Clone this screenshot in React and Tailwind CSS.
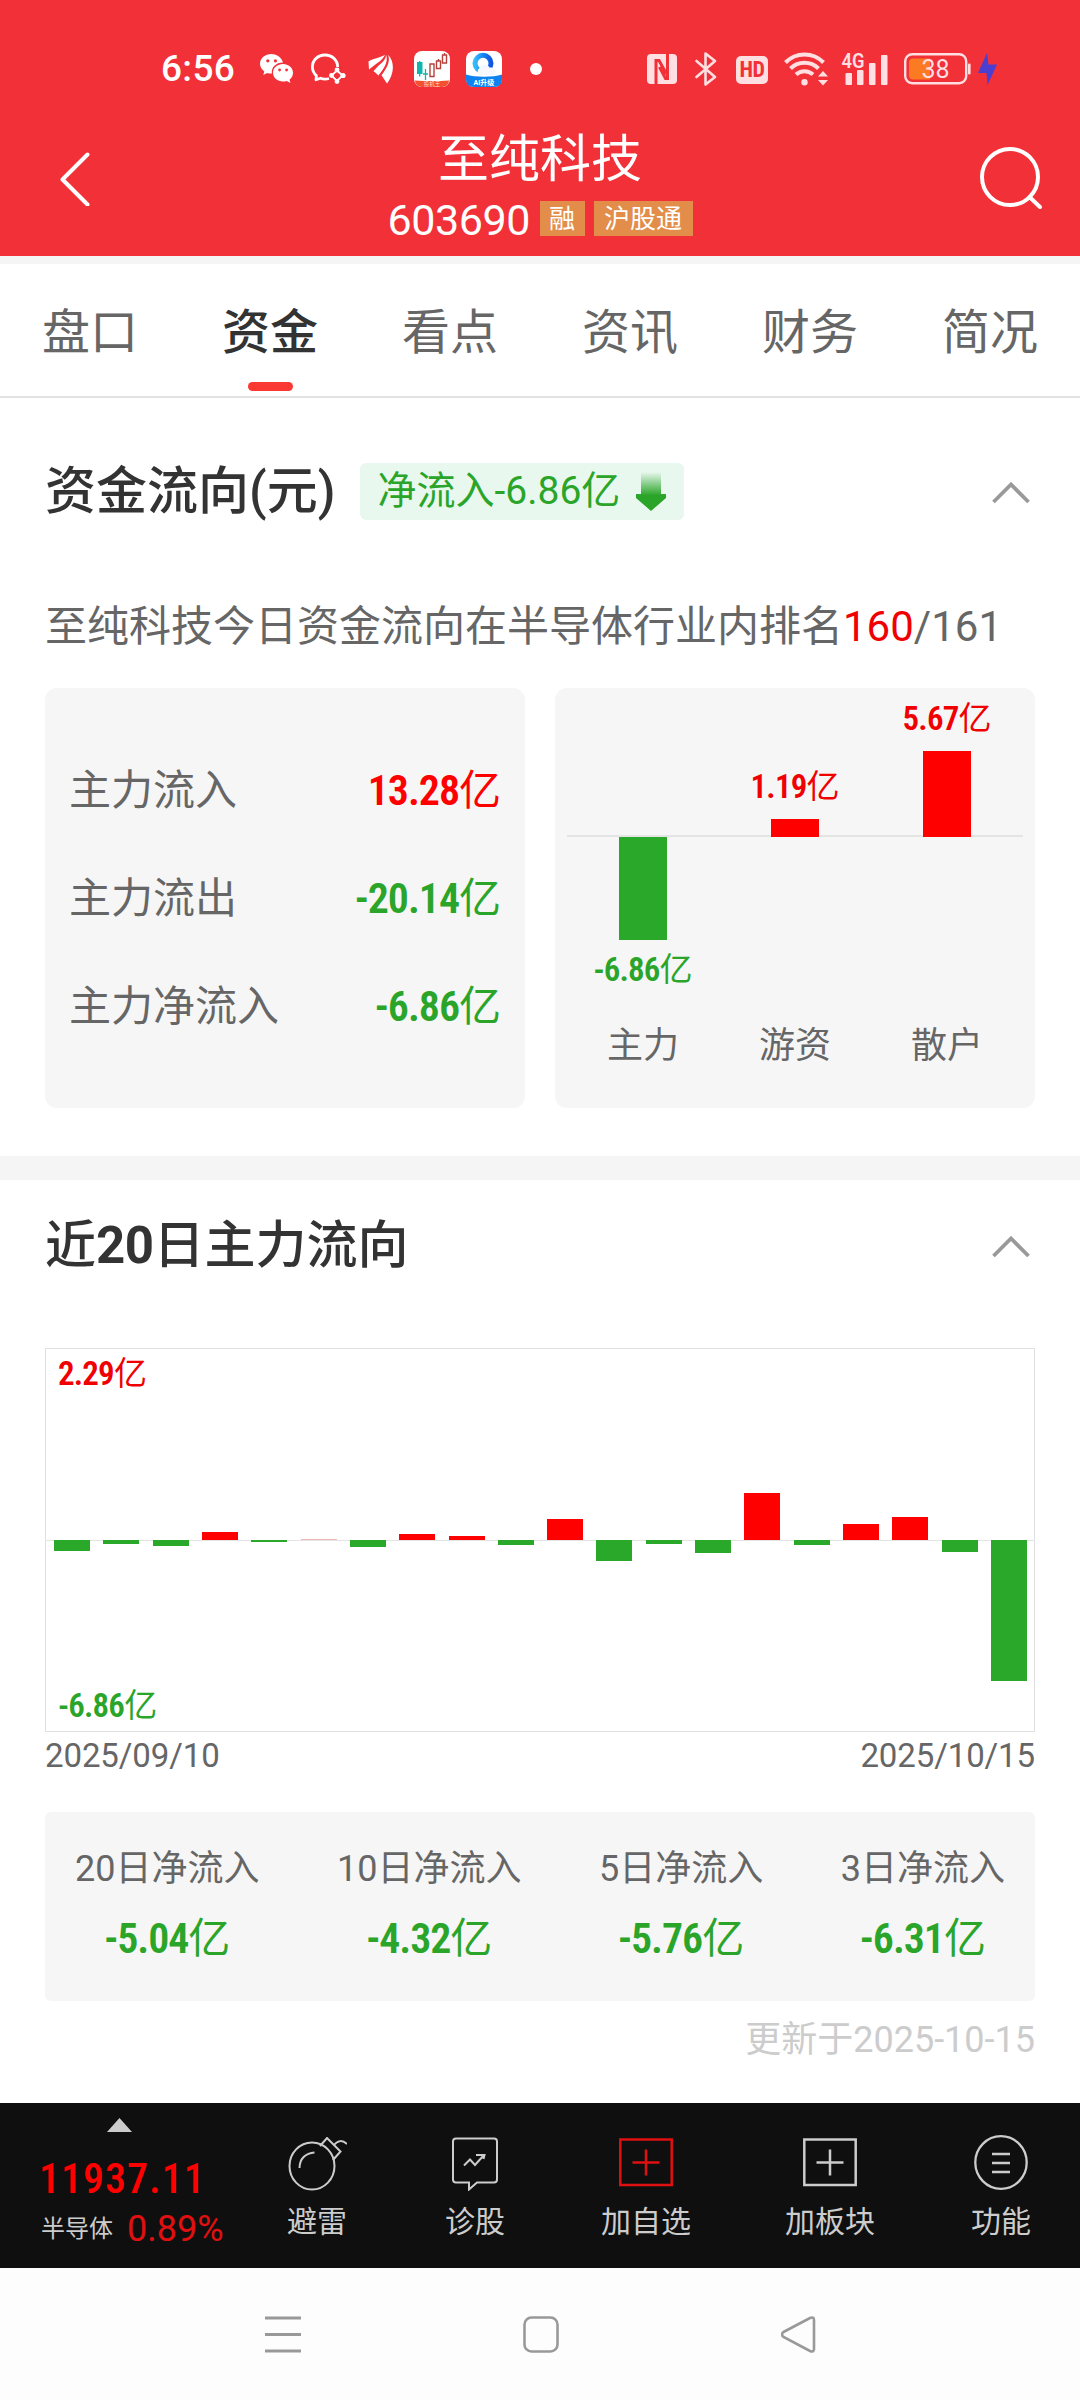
const tabs = ["盘口", "资金", "看点", "资讯", "财务", "简况"];

const flows = [
  { label: "主力流入", value: "13.28", color: "text-[#ff0000]" },
  { label: "主力流出", value: "-20.14", color: "text-[#2aa52a]" },
  { label: "主力净流入", value: "-6.86", color: "text-[#2aa52a]" },
];

const holders = [
  { name: "主力", value: "-6.86", up: 0, down: 103 },
  { name: "游资", value: "1.19", up: 18, down: 0 },
  { name: "散户", value: "5.67", up: 86, down: 0 },
];

// bar heights in px, negative = outflow
const days = [-11, -4, -5.5, 8, -1.6, 0.4, -6.5, 6, 4.5, -4.5, 21, -21, -4, -13, 47.5, -4.5, 16, 23.5, -12, -141];

const sums = [
  { label: "20日净流入", value: "-5.04" },
  { label: "10日净流入", value: "-4.32" },
  { label: "5日净流入", value: "-5.76" },
  { label: "3日净流入", value: "-6.31" },
];

// narrow bold figures followed by the unit
function Amount({ value, unit = "亿" }) {
  return (
    <span className="inline-flex whitespace-nowrap">
      <span className="font-semibold font-stretch-condensed tracking-[-0.025em]">{value}</span>
      <span>{unit}</span>
    </span>
  );
}

function StatusBar() {
  return (
    <div className="flex h-[137px] items-center pl-[161px] text-white">
      <span className="mt-px w-[73px] text-[37px] font-medium leading-[40px] tracking-[0.3px]">6:56</span>

      {/* WeChat */}
      <svg className="ml-[26px]" width="34" height="29" viewBox="0 0 34 29">
        <path fill="#fff" d="M11.5 0C5 0 0 4.300 0 9.800c0 3.200 1.700 5.800 4.300 7.600L3.200 21l4-2.100c1.600.5 3 .7 4.700.6C11 13.600 16 8.600 23 8.600 21.800 3.600 17 0 11.500 0z" />
        <path fill="#fff" d="M33 18.800c0-4.900-4.600-8.800-10-8.800s-10 3.900-10 8.800 4.600 8.800 10 8.800c1.400 0 2.600-.2 3.800-.6l3.700 2-1-3.200c2.200-1.700 3.500-4.200 3.500-7z" />
        <g fill="#f23038">
          <circle cx="7.800" cy="6.800" r="1.600" /><circle cx="15.400" cy="6.800" r="1.600" />
          <circle cx="19.600" cy="16" r="1.400" /><circle cx="26.600" cy="16" r="1.400" />
        </g>
      </svg>

      {/* chat bubble */}
      <svg className="ml-[17px]" width="35" height="31" viewBox="0 0 35 31" fill="none" stroke="#fff" strokeWidth="2.800">
        <path d="M18 25.500c-3 .8-6 .7-8.500-.3L5 26.800l.4-4.200C2.500 20 1.400 17 1.400 14 1.400 7 7 2 14 2s12.500 5 12.700 12" strokeLinejoin="round" />
        <path d="M26 17.500l5.500 5-5.500 5.500-5.500-5.500z" strokeWidth="1.800" />
        <g fill="#fff" stroke="none"><circle cx="26" cy="17" r="2.400" /><circle cx="32" cy="22.500" r="2.600" /><circle cx="26" cy="28.500" r="2.400" /><circle cx="20.500" cy="22.500" r="2.400" /></g>
      </svg>

      {/* feather */}
      <svg className="ml-[22px]" width="26" height="30" viewBox="0 0 26 30" fill="#fff">
        <path d="M.5 7.500C6 4 11 4.500 17 .8 14 7 9 9 1 15.500z" />
        <path d="M18 .5c.5 6-6 9-12.500 16.500l5 4.500C14.500 15.500 21 9 18 .5z" />
        <path d="M20 .8c3 7-2 14-6.500 20.500L19 29.500C25 22 28 9 20 .8z" />
      </svg>

      {/* trading app */}
      <svg className="ml-5" width="36" height="36" viewBox="0 0 36 36">
        <rect width="36" height="36" rx="8" fill="#fff" />
        <path d="M1 29.500q17 1 34 0C35 33 32 36 28 36H8c-4 0-7-3-7-6.500z" fill="#f4502f" />
        <rect x="3" y="11" width="5.500" height="12" fill="#13b5aa" />
        <path d="M5.700 10v15.500M11.500 18v11M9 23h5" stroke="#13b5aa" strokeWidth="1.300" />
        <g fill="none" stroke="#b8403a" strokeWidth="1.400"><path d="M16 13h4v12.500h-4zM22.500 10h4v7.500h-4zM28.500 4h4v8h-4zM24.500 8v2M30.500 2v2" /></g>
        <text x="18" y="34.600" textAnchor="middle" fontSize="5.500" fill="#ffd9cf">投机王</text>
      </svg>

      {/* AI browser app */}
      <svg className="ml-4" width="36" height="36" viewBox="0 0 36 36">
        <defs><linearGradient id="ring"><stop offset="0" stopColor="#35bdfa" /><stop offset=".5" stopColor="#1a84f5" /><stop offset="1" stopColor="#1256e0" /></linearGradient></defs>
        <rect width="36" height="36" rx="8" fill="#fff" />
        <path d="M0 23.500c9 3 27 3 36 0V28c0 5-3 8-8 8H8c-5 0-8-3-8-8z" fill="#0e83f0" />
        <circle cx="17" cy="12.300" r="8" fill="none" stroke="url(#ring)" strokeWidth="5" />
        <path d="M14 24a4 4 0 0 1-.5-7 5.500 5.500 0 0 1 10-.5c4-.5 7 2 6 7.500z" fill="#f5f9ff" />
        <text x="18" y="34" textAnchor="middle" fontSize="7" fontWeight="700" fill="#fff">AI升级</text>
      </svg>

      <span className="ml-7 size-3 rounded-full bg-white" />

      {/* NFC */}
      <svg className="ml-[105px]" width="30" height="30" viewBox="0 0 30 30">
        <rect width="30" height="30" rx="4" fill="#ffdfe1" />
        <path d="M9 30V6.500h3L19.500 20M20.500 0v24.500h-2L12.500 13" fill="none" stroke="#f23038" strokeWidth="3" />
      </svg>
      {/* bluetooth */}
      <svg className="ml-[18px]" width="22" height="34" viewBox="0 0 22 34" fill="none" stroke="#ffdfe1" strokeWidth="2.600" strokeLinejoin="round" strokeLinecap="round">
        <path d="M1.500 9l18.500 16-9.500 7.500V1.500L20 9 1.500 25" />
      </svg>
      <span className="ml-[19px] mt-[3px] flex h-7 w-8 items-center justify-center rounded-[5px] bg-[#ffdfe1] text-[22px] font-bold leading-none text-[#f23038]">
        <span className="tracking-[-0.5px] font-stretch-condensed">HD</span>
      </span>
      {/* wifi */}
      <svg className="ml-4" width="44" height="35" viewBox="0 0 44 35" fill="none" stroke="#ffdfe1" strokeWidth="4">
        <path d="M1.500 11.500a26.500 26.500 0 0 1 38 0M6.500 17.500a20 20 0 0 1 28 0M12 23.500a12.500 12.500 0 0 1 17 0" />
        <circle cx="20.500" cy="31.300" r="3.200" fill="#ffdfe1" stroke="none" />
        <path d="M34 25.500l5-5.500 5 5.500zM34 29h10l-5 5.500z" fill="#ffdfe1" stroke="none" />
      </svg>
      {/* signal */}
      <svg className="ml-3.5 overflow-visible" width="46" height="34" viewBox="0 0 46 34" fill="#ffdfe1">
        <text x="-.5" y="15.500" fontSize="20" fontWeight="600" textLength="23" lengthAdjust="spacingAndGlyphs">4G</text>
        <rect x="3.500" y="21" width="6.500" height="12" rx="1" /><rect x="15" y="18" width="6.500" height="15" rx="1" />
        <rect x="27" y="11" width="6.500" height="22" rx="1" /><rect x="39" y="3" width="6.500" height="30" rx="1" />
      </svg>
      {/* battery */}
      <svg className="ml-4" width="67" height="32" viewBox="0 0 67 32">
        <rect x="1.200" y="1.200" width="61" height="29" rx="7" fill="none" stroke="#ffdfe1" strokeWidth="2.400" />
        <path d="M9 5.500h17v21H9c-2.500 0-4-1.500-4-4v-13c0-2.500 1.500-4 4-4z" fill="#fc7a21" />
        <rect x="64" y="10.500" width="2.600" height="11" rx="1.300" fill="#ffdfe1" />
        <text x="31.500" y="25" textAnchor="middle" fontSize="25" fill="#ffdfe1">38</text>
      </svg>
      <svg className="ml-1.5" width="22" height="32" viewBox="0 0 22 32">
        <path d="M10 0L1 20h8.500l1 12L20 11.500h-8.500z" fill="#4a3fd0" />
      </svg>
    </div>
  );
}

function Chevron() {
  return (
    <svg className="mt-0.5" width="38" height="22" viewBox="0 0 38 22" fill="none" stroke="#999" strokeWidth="3.800">
      <path d="M1.500 20L19 2.500 36.500 20" />
    </svg>
  );
}

function Tool({ label, width, children }) {
  return (
    <div className={`flex flex-col items-center ${width}`}>
      <div className="flex h-[88px] items-end justify-center">{children}</div>
      <span className="mt-[11px] text-[30px] leading-10 text-[#ccc]">{label}</span>
    </div>
  );
}

export default function App() {
  return (
    <div className="flex h-[2400px] w-[1080px] flex-col overflow-hidden bg-white font-[Roboto,'Noto_Sans_CJK_SC',sans-serif] text-[#666]">
      {/* Header */}
      <header className="h-64 shrink-0 bg-[#f23038] text-white">
        <StatusBar />
        <div className="flex h-[119px] items-start justify-between pl-[59px] pr-9">
          <svg className="mt-[15px]" width="32" height="54" viewBox="0 0 32 54" fill="none" stroke="#fff" strokeWidth="4" strokeLinecap="round" strokeLinejoin="round">
            <path d="M28.500 2.500L3.500 27.500l25 25" />
          </svg>
          <div className="ml-[9px] flex flex-col items-center">
            <h1 className="-mt-[7px] text-[51px] leading-[60px]">至纯科技</h1>
            <div className="mt-2.5 flex h-[36px] items-center">
              <span className="mt-[3px] w-[142px] text-[43px] leading-10 tracking-[-0.4px]">603690</span>
              <span className="ml-2.5 h-[35px] w-[45px] bg-[#e38d4b] text-center text-[26px] leading-[37px]">融</span>
              <span className="ml-[9px] h-[35px] w-[99px] bg-[#e38d4b] text-center text-[26px] leading-[37px]">沪股通</span>
            </div>
          </div>
          <svg className="mt-[9px]" width="64" height="64" viewBox="0 0 64 64" fill="none" stroke="#fff" strokeWidth="4">
            <circle cx="30" cy="31" r="28" /><path d="M49.500 51L60 61" strokeLinecap="round" />
          </svg>
        </div>
      </header>
      <div className="h-2 shrink-0 bg-[#f5f5f5]" />

      {/* Tabs */}
      <nav className="flex h-[134px] shrink-0 border-b-2 border-[#e2e2e2]">
        {tabs.map((t) => (
          <div key={t} className="flex w-[180px] flex-col items-center pt-[39px]">
            <span className={t === "资金" ? "text-[48px] font-medium leading-[60px] text-[#333]" : "text-[48px] leading-[60px]"}>{t}</span>
            {t === "资金" && <span className="mt-[19px] h-[9px] w-[45px] rounded-full bg-[#fa3932]" />}
          </div>
        ))}
      </nav>

      {/* Fund flow */}
      <section className="h-[758px] shrink-0 px-[45px] pt-[65px]">
        <div className="flex h-[57px] items-center pr-[5px]">
          <h2 className="text-[51px] font-medium leading-[60px] text-[#333]">资金流向(元)</h2>
          <div className="ml-6 flex h-[57px] w-[324px] items-center rounded-md bg-[#e9f8ee] pl-[18px] text-[39px] leading-[57px] text-[#2aa52a]">
            <span className="w-[242px] whitespace-nowrap">净流入-6.86亿</span>
            <svg className="ml-4" width="30" height="40" viewBox="0 0 30 40">
              <defs>
                <linearGradient id="fade" x1="0" y1="0" x2="0" y2="1">
                  <stop offset="0" stopColor="#2aa52a" stopOpacity="0" />
                  <stop offset=".6" stopColor="#2aa52a" />
                </linearGradient>
              </defs>
              <path d="M5 0h20v22h5v4L15 39 0 26v-4h5z" fill="url(#fade)" />
            </svg>
          </div>
          <div className="ml-auto"><Chevron /></div>
        </div>
        <p className="mt-[77px] whitespace-nowrap text-[42px] leading-[60px]">
          至纯科技今日资金流向在半导体行业内排名<span className="text-[#f00000]">160</span>/161
        </p>
        <div className="mt-[31px] flex justify-between">
          <div className="flex h-[420px] w-[480px] flex-col rounded-xl bg-[#f6f6f6] px-6 pt-[49px]">
            {flows.map((f) => (
              <div key={f.label} className="flex h-[108px] items-center justify-between text-[42px] leading-[50px]">
                <span>{f.label}</span>
                <span className={f.color}><Amount value={f.value} /></span>
              </div>
            ))}
          </div>
          <div className="h-[420px] w-[480px] rounded-xl bg-[#f6f6f6] px-3">
            <div className="flex h-[149px] border-b-2 border-[#e4e4e4]">
              {holders.map((h) => (
                <div key={h.name} className="flex flex-1 flex-col items-center justify-end text-[33px] leading-10 text-[#f00000]">
                  {h.up > 0 && (
                    <>
                      <Amount value={h.value} />
                      <div className="-mb-[2px] mt-3 w-12 bg-[#ff0000]" style={{ height: h.up }} />
                    </>
                  )}
                </div>
              ))}
            </div>
            <div className="flex h-[184px]">
              {holders.map((h) => (
                <div key={h.name} className="flex flex-1 flex-col items-center text-[33px] leading-10 text-[#2aa52a]">
                  {h.down > 0 && (
                    <>
                      <div className="mb-2.5 w-12 bg-[#29a829]" style={{ height: h.down }} />
                      <Amount value={h.value} />
                    </>
                  )}
                </div>
              ))}
            </div>
            <div className="flex text-[36px] leading-[50px]">
              {holders.map((h) => <span key={h.name} className="flex-1 text-center">{h.name}</span>)}
            </div>
          </div>
        </div>
      </section>
      <div className="h-6 shrink-0 bg-[#f5f5f5]" />

      {/* Last 20 days */}
      <section className="h-[923px] shrink-0 px-[45px] pt-9">
        <div className="flex h-[60px] items-center justify-between pr-[5px]">
          <h2 className="text-[51px] font-medium leading-[60px] text-[#333]">近<b className="tracking-[-0.5px]">20</b>日主力流向</h2>
          <Chevron />
        </div>
        <div className="relative mt-[72px] h-[384px] border border-[#e0e0e0]">
          <span className="absolute left-3 top-[5px] text-[33px] leading-10 text-[#f00000]"><Amount value="2.29" /></span>
          <span className="absolute bottom-[5px] left-3 text-[33px] leading-10 text-[#2aa52a]"><Amount value="-6.86" /></span>
          <div className="flex h-[192px] items-end justify-between border-b border-[#e4e4e4] pl-2 pr-[7px]">
            {days.map((d, i) => (
              <div key={i} className={d < 1 ? "w-9 bg-[#f2b8b8]" : "w-9 bg-[#ff0000]"} style={{ height: d > 0 ? Math.max(d, 1.5) : 0 }} />
            ))}
          </div>
          <div className="relative -mt-px flex items-start justify-between pl-2 pr-[7px]">
            {days.map((d, i) => (
              <div key={i} className="w-9 bg-[#29a829]" style={{ height: d < 0 ? -d : 0 }} />
            ))}
          </div>
        </div>
        <div className="mt-1 flex justify-between text-[33px] leading-10 tracking-[-0.1px]">
          <span>2025/09/10</span>
          <span>2025/10/15</span>
        </div>
        <div className="mt-9 flex h-[189px] justify-between rounded-md bg-[#f6f6f6] px-[30px] pt-[34px]">
          {sums.map((s) => (
            <div key={s.label} className="flex flex-col items-center">
              <span className="text-[36px] leading-[46px]">{s.label}</span>
              <span className="mt-[22px] text-[42px] leading-[50px] text-[#2aa52a]"><Amount value={s.value} /></span>
            </div>
          ))}
        </div>
        <p className="mt-3.5 text-right text-[36px] leading-[50px] text-[#ccc]">更新于2025-10-15</p>
      </section>

      {/* Toolbar */}
      <footer className="flex h-[165px] shrink-0 bg-[#0f0f0f]">
        <div className="w-[238px] pl-[41px]">
          <svg className="ml-[66px] mt-[15px]" width="25" height="14" viewBox="0 0 25 14"><path d="M12.500 0L25 14H0z" fill="#ccc" /></svg>
          <div className="-ml-0.5 mt-[27px] text-[42px] font-medium font-stretch-condensed leading-10 tracking-[1px] text-[#ff0000]">11937.11</div>
          <div className="mt-2.5 flex h-10 items-center whitespace-nowrap">
            <span className="text-[24px] text-[#ccc]">半导体</span>
            <span className="ml-[14px] text-[36px] leading-10 text-[#e01010]">0.89%</span>
          </div>
        </div>
        <Tool label="避雷" width="w-[158px]">
          <svg width="60" height="54" viewBox="0 0 60 54" fill="none" stroke="#ccc" strokeWidth="2">
            <ellipse cx="25" cy="29" rx="22.500" ry="23.500" />
            <path d="M12.500 31c0-9 6-15 15-15.500M33 9l7-8 13.500 13.500-7.500 8.500M47 8c4-5 9-5 13-1" />
          </svg>
        </Tool>
        <Tool label="诊股" width="w-[158px]">
          <svg width="46" height="54" viewBox="0 0 46 54" fill="none" stroke="#ccc" strokeWidth="2">
            <path d="M4 1.500h38q3 0 3 3v38q0 3-3 3H25L17 52.500v-7H4q-3 0-3-3v-38q0-3 3-3z" />
            <path d="M12 28.500l6-6 5 5.500 9-10M24 18h8.500l-1 4" />
          </svg>
        </Tool>
        <Tool label="加自选" width="w-[184px]">
          <svg width="54" height="54" viewBox="0 0 54 54" fill="none" stroke="#e01010" strokeWidth="2.500">
            <path d="M1.300 2.500h51.400v45.500H1.300zM27 12.500v26M13.500 25.500h27" />
          </svg>
        </Tool>
        <Tool label="加板块" width="w-[184px]">
          <svg width="54" height="54" viewBox="0 0 54 54" fill="none" stroke="#ccc" strokeWidth="2.500">
            <path d="M1.300 2.500h51.400v45.500H1.300zM27 12.500v26M13.500 25.500h27" />
          </svg>
        </Tool>
        <Tool label="功能" width="w-[158px]">
          <svg width="54" height="56" viewBox="0 0 54 56" fill="none" stroke="#ccc" strokeWidth="2.300">
            <ellipse cx="27" cy="27.500" rx="25.700" ry="26.300" />
            <path d="M18 19h18M18 28h18M18 37h18" />
          </svg>
        </Tool>
      </footer>

      {/* System navigation */}
      <div className="flex grow items-center justify-center gap-[222px] bg-[#fdfdfd] pl-0.5">
        <svg width="36" height="37" viewBox="0 0 36 37" stroke="#999" strokeWidth="3"><path d="M0 2h36M0 18.500h36M0 35h36" /></svg>
        <svg width="36" height="37" viewBox="0 0 36 37" fill="none" stroke="#999" strokeWidth="2.600"><rect x="1.500" y="1.500" width="33" height="34" rx="7" /></svg>
        <svg width="36" height="37" viewBox="0 0 36 37" fill="none" stroke="#999" strokeWidth="2.600"><path d="M2.500 16L29 2q4-1.500 4 2v29q0 3.500-4 2L2.500 21q-3-2.500 0-5z" /></svg>
      </div>
    </div>
  );
}
